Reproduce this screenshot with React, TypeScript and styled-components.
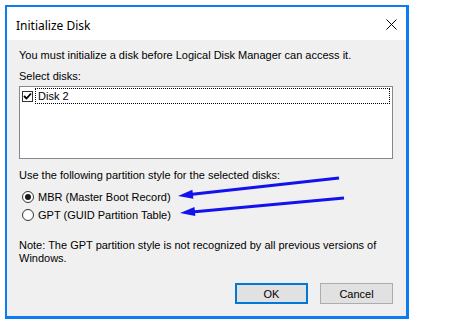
import React from "react";
import styled, { createGlobalStyle } from "styled-components";

const GlobalStyle = createGlobalStyle`
  html, body {
    margin: 0;
    padding: 0;
    background: #ffffff;
  }
  body {
    font-family: "Liberation Sans", Arial, sans-serif;
    font-size: 11px;
    color: #000;
  }
`;

// annotation arrows drawn over the screenshot
function Arrows() {
  return (
    <Overlay width="474" height="328" viewBox="0 0 474 328">
      <line x1="339" y1="178" x2="190" y2="194.5" stroke="#1212ee" strokeWidth="3" />
      <polygon points="178,196 193.4,198.8 192.4,189.8" fill="#1212ee" />
      <line x1="344" y1="198" x2="192" y2="212" stroke="#1212ee" strokeWidth="3" />
      <polygon points="180,213 195.3,216.1 194.5,207.1" fill="#1212ee" />
    </Overlay>
  );
}

function App() {
  const [style, setStyle] = React.useState("mbr");
  const [checked, setChecked] = React.useState(true);

  return (
    <Page>
      <GlobalStyle />
      <Dialog>
        <TitleBar>
          <Title>Initialize Disk</Title>
          <CloseIcon width="11" height="11" viewBox="0 0 11 11">
            <path d="M0.5,0.5 L10.5,10.5 M10.5,0.5 L0.5,10.5" stroke="#000" strokeWidth="1" />
          </CloseIcon>
        </TitleBar>
        <Body>
          <Line>You must initialize a disk before Logical Disk Manager can access it.</Line>
          <Label>Select disks:</Label>
          <ListBox>
            <ListRow onClick={() => setChecked(!checked)}>
              <CheckBox>
                {checked && (
                  <svg width="9" height="9" viewBox="0 0 9 9">
                    <path d="M1,4 L3.5,6.5 L8,1.5" stroke="#000" strokeWidth="1.8" fill="none" />
                  </svg>
                )}
              </CheckBox>
              <FocusText>Disk 2</FocusText>
            </ListRow>
          </ListBox>
          <GroupLabel>Use the following partition style for the selected disks:</GroupLabel>
          <RadioRow $first onClick={() => setStyle("mbr")}>
            <Radio $on={style === "mbr"} />
            <span>MBR (Master Boot Record)</span>
          </RadioRow>
          <RadioRow onClick={() => setStyle("gpt")}>
            <Radio $on={style === "gpt"} />
            <span>GPT (GUID Partition Table)</span>
          </RadioRow>
          <Note>
            Note: The GPT partition style is not recognized by all previous versions of
            <br />
            Windows.
          </Note>
          <Buttons>
            <Button $default>OK</Button>
            <Button>Cancel</Button>
          </Buttons>
        </Body>
      </Dialog>
      <Arrows />
    </Page>
  );
}

const Page = styled.div`
  position: relative;
  width: 474px;
  height: 328px;
  padding: 5px 0 0 5px;
  box-sizing: border-box;
`;

const Dialog = styled.div`
  width: 404px;
  height: 314px;
  box-sizing: border-box;
  border: 2px solid #0b7cf2;
  border-right-width: 3px;
  border-bottom-width: 3px;
  background: #f0f0f0;
  display: flex;
  flex-direction: column;
`;

const TitleBar = styled.div`
  height: 33px;
  background: #ffffff;
  display: flex;
  align-items: center;
  justify-content: space-between;
  padding: 0 9px 0 9px;
  flex-shrink: 0;
`;

const Title = styled.div`
  font-family: "Noto Sans", "Open Sans", sans-serif;
  font-size: 12px;
  color: #000;
  margin-top: 3px;
`;

const CloseIcon = styled.svg`
  margin-top: 2px;
`;

const Body = styled.div`
  flex: 1;
  display: flex;
  flex-direction: column;
  padding: 9px 13px 0 12px;
`;

const Line = styled.div`
  line-height: 13px;
  white-space: nowrap;
`;

const Label = styled(Line)`
  margin-top: 8px;
`;

const ListBox = styled.div`
  margin-top: 3px;
  height: 73px;
  box-sizing: border-box;
  border: 1px solid #828790;
  background: #ffffff;
  padding: 1px 2px 0 2px;
`;

const ListRow = styled.div`
  display: flex;
  align-items: center;
  height: 16px;
  gap: 2px;
`;

const CheckBox = styled.div`
  width: 11px;
  height: 11px;
  box-sizing: border-box;
  border: 1px solid #333;
  background: #fff;
  display: flex;
  align-items: center;
  justify-content: center;
`;

const FocusText = styled.div`
  flex: 1;
  height: 16px;
  box-sizing: border-box;
  border: 1px dotted #000;
  line-height: 14px;
  padding-left: 2px;
`;

const GroupLabel = styled(Line)`
  margin-top: 10px;
`;

const RadioRow = styled.div<{ $first?: boolean }>`
  display: flex;
  align-items: center;
  gap: 4px;
  height: 16px;
  margin-top: ${(p) => (p.$first ? "7px" : "2px")};
  padding-left: 3px;
  line-height: 13px;
`;

const Radio = styled.div<{ $on?: boolean }>`
  width: 12px;
  height: 12px;
  box-sizing: border-box;
  border-radius: 50%;
  border: 1px solid #333;
  background: #fff;
  display: flex;
  align-items: center;
  justify-content: center;
  &::after {
    content: "";
    width: 6px;
    height: 6px;
    border-radius: 50%;
    background: ${(p) => (p.$on ? "#1a1a1a" : "transparent")};
  }
`;

const Note = styled.div`
  margin-top: 16px;
  line-height: 13px;
  white-space: nowrap;
`;

const Buttons = styled.div`
  display: flex;
  justify-content: flex-end;
  gap: 12px;
  margin-top: 18px;
`;

const Button = styled.button<{ $default?: boolean }>`
  width: 73px;
  height: 21px;
  box-sizing: border-box;
  font-family: "Liberation Sans", Arial, sans-serif;
  font-size: 11px;
  color: #000;
  background: #e1e1e1;
  border: ${(p) => (p.$default ? "2px solid #0078d7" : "1px solid #adadad")};
  padding: 0;
`;

const Overlay = styled.svg`
  position: absolute;
  left: 0;
  top: 0;
  pointer-events: none;
`;

export default App;
